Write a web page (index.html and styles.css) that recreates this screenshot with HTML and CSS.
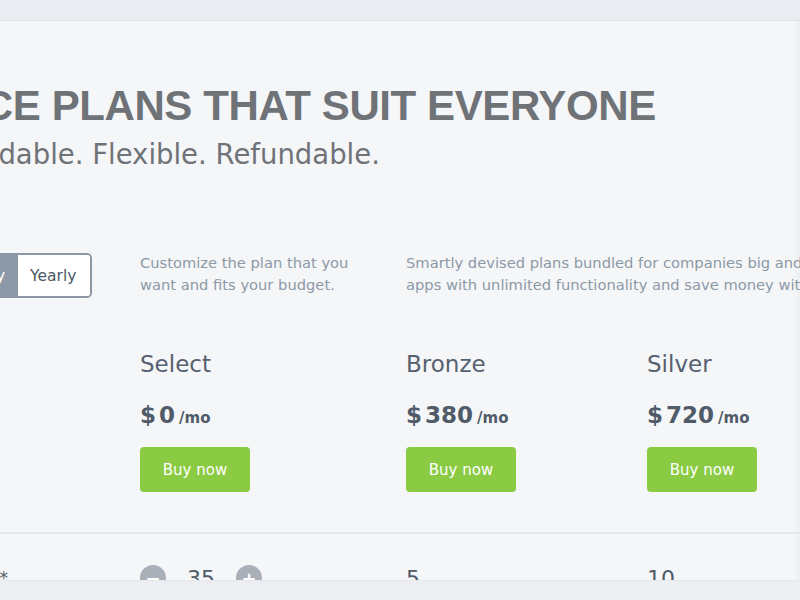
FILE: index.html
```html
<!DOCTYPE html>
<html>
<head>
<meta charset="utf-8">
<link rel="stylesheet" href="styles.css">
</head>
<body>
<div class="frame-top"></div>
<main class="main">
  <div class="content">
    <h1 class="title">PRICE PLANS THAT SUIT EVERYONE</h1>
    <p class="subtitle">Affordable. Flexible. Refundable.</p>

    <div class="row intro">
      <div class="col-left">
        <div class="toggle">
          <span class="toggle-opt active">Monthly</span>
          <span class="toggle-opt">Yearly</span>
        </div>
      </div>
      <p class="desc col-a">Customize the plan that you want and fits your budget.</p>
      <p class="desc col-b wide">Smartly devised plans bundled for companies big and small. Build apps with unlimited functionality and save money with us.</p>
    </div>

    <div class="row plans">
      <div class="col-left"></div>
      <div class="plan col-a">
        <h2 class="plan-name">Select</h2>
        <div class="price"><span class="amount">$<span class="num">0</span></span><span class="per">/mo</span></div>
        <button class="buy">Buy now</button>
      </div>
      <div class="plan col-b">
        <h2 class="plan-name">Bronze</h2>
        <div class="price"><span class="amount">$<span class="num">380</span></span><span class="per">/mo</span></div>
        <button class="buy">Buy now</button>
      </div>
      <div class="plan col-c">
        <h2 class="plan-name">Silver</h2>
        <div class="price"><span class="amount">$<span class="num">720</span></span><span class="per">/mo</span></div>
        <button class="buy">Buy now</button>
      </div>
    </div>

    <div class="divider"></div>

    <div class="row feature">
      <div class="col-left feature-label">Users*</div>
      <div class="col-a stepper">
        <span class="step">&minus;</span>
        <span class="step-val">35</span>
        <span class="step">+</span>
      </div>
      <div class="col-b feature-val">5</div>
      <div class="col-c feature-val">10</div>
    </div>
  </div>
</main>
<div class="frame-bottom"></div>
</body>
</html>
```

FILE: styles.css
```css
* { box-sizing: border-box; }
html, body { margin: 0; padding: 0; }
body {
  width: 800px;
  height: 600px;
  overflow: hidden;
  background: #f5f6f8;
  font-family: "DejaVu Sans", sans-serif;
  display: flex;
  flex-direction: column;
}
.frame-top {
  height: 21px;
  flex: none;
  background: #e9ecf0;
  border-bottom: 1px solid #e1e5ea;
}
.frame-bottom {
  height: 20px;
  flex: none;
  background: #eceef1;
  border-top: 1px solid #e6e8ec;
  position: relative;
  z-index: 1;
}
.main {
  flex: 1;
  overflow: hidden;
  background: #f5f6f8;
  box-shadow: inset -8px 0 10px -8px rgba(0,0,0,0.06);
}
.content {
  margin-left: -86px;
  width: 1200px;
}
.title {
  margin: 57px 0 0 0;
  font-family: "Liberation Sans", Arial, sans-serif;
  font-size: 42px;
  font-weight: 700;
  color: #6f7378;
  letter-spacing: -0.4px;
  line-height: 56px;
}
.subtitle {
  margin: 4px 0 0 19px;
  font-size: 27.5px;
  color: #6f7378;
  line-height: 32px;
}
.row {
  display: flex;
}
.col-left { width: 226px; flex: none; }
.col-a { width: 266px; flex: none; }
.col-b { width: 241px; flex: none; }
.col-c { width: 240px; flex: none; }
.intro { margin-top: 82px; align-items: flex-start; }
.toggle {
  display: inline-flex;
  margin-top: 1px;
  margin-left: 15px;
  border: 2px solid #8c98a5;
  border-radius: 5px;
  overflow: hidden;
  height: 45px;
}
.toggle-opt {
  display: flex;
  align-items: center;
  padding: 0 14px 0 12px;
  font-size: 15.5px;
  color: #4c5866;
  background: #fff;
}
.toggle-opt.active {
  padding: 0 13px 0 12px;
  background: #8c98a5;
  color: #fff;
}
.desc {
  margin: 0;
  font-size: 14.7px;
  line-height: 22px;
  color: #8c99a6;
  padding-right: 20px;
}
.desc.wide { width: 505px; padding-right: 0; }
.plans { margin-top: 51px; }
.plan-name {
  margin: 0;
  font-size: 23px;
  font-weight: 400;
  color: #556170;
  line-height: 30px;
}
.price {
  margin-top: 22px;
  color: #4f5b69;
  font-weight: 700;
  font-size: 23px;
  line-height: 28px;
}
.num { margin-left: 3px; }
.per { font-size: 15px; margin-left: 4px; }
.buy {
  display: block;
  margin-top: 15px;
  width: 110px;
  height: 45px;
  border: none;
  border-radius: 4px;
  background: #8acb43;
  color: #fff;
  font-family: inherit;
  font-size: 15px;
  padding: 0;
}
.divider {
  margin-top: 40px;
  height: 2px;
  background: #e4e7eb;
}
.feature { margin-top: 31px; align-items: center; }
.feature-label {
  font-size: 17px;
  color: #4f5b69;
  text-align: right;
  padding-right: 132px;
}
.stepper { display: flex; align-items: center; }
.step {
  width: 26px;
  height: 26px;
  border-radius: 50%;
  background: #a9b0b8;
  color: #fff;
  font-size: 18px;
  font-weight: 700;
  display: flex;
  align-items: center;
  justify-content: center;
}
.step-val {
  width: 70px;
  text-align: center;
  font-size: 22px;
  color: #4f5b69;
}
.feature-val {
  font-size: 22px;
  color: #4f5b69;
}
```
